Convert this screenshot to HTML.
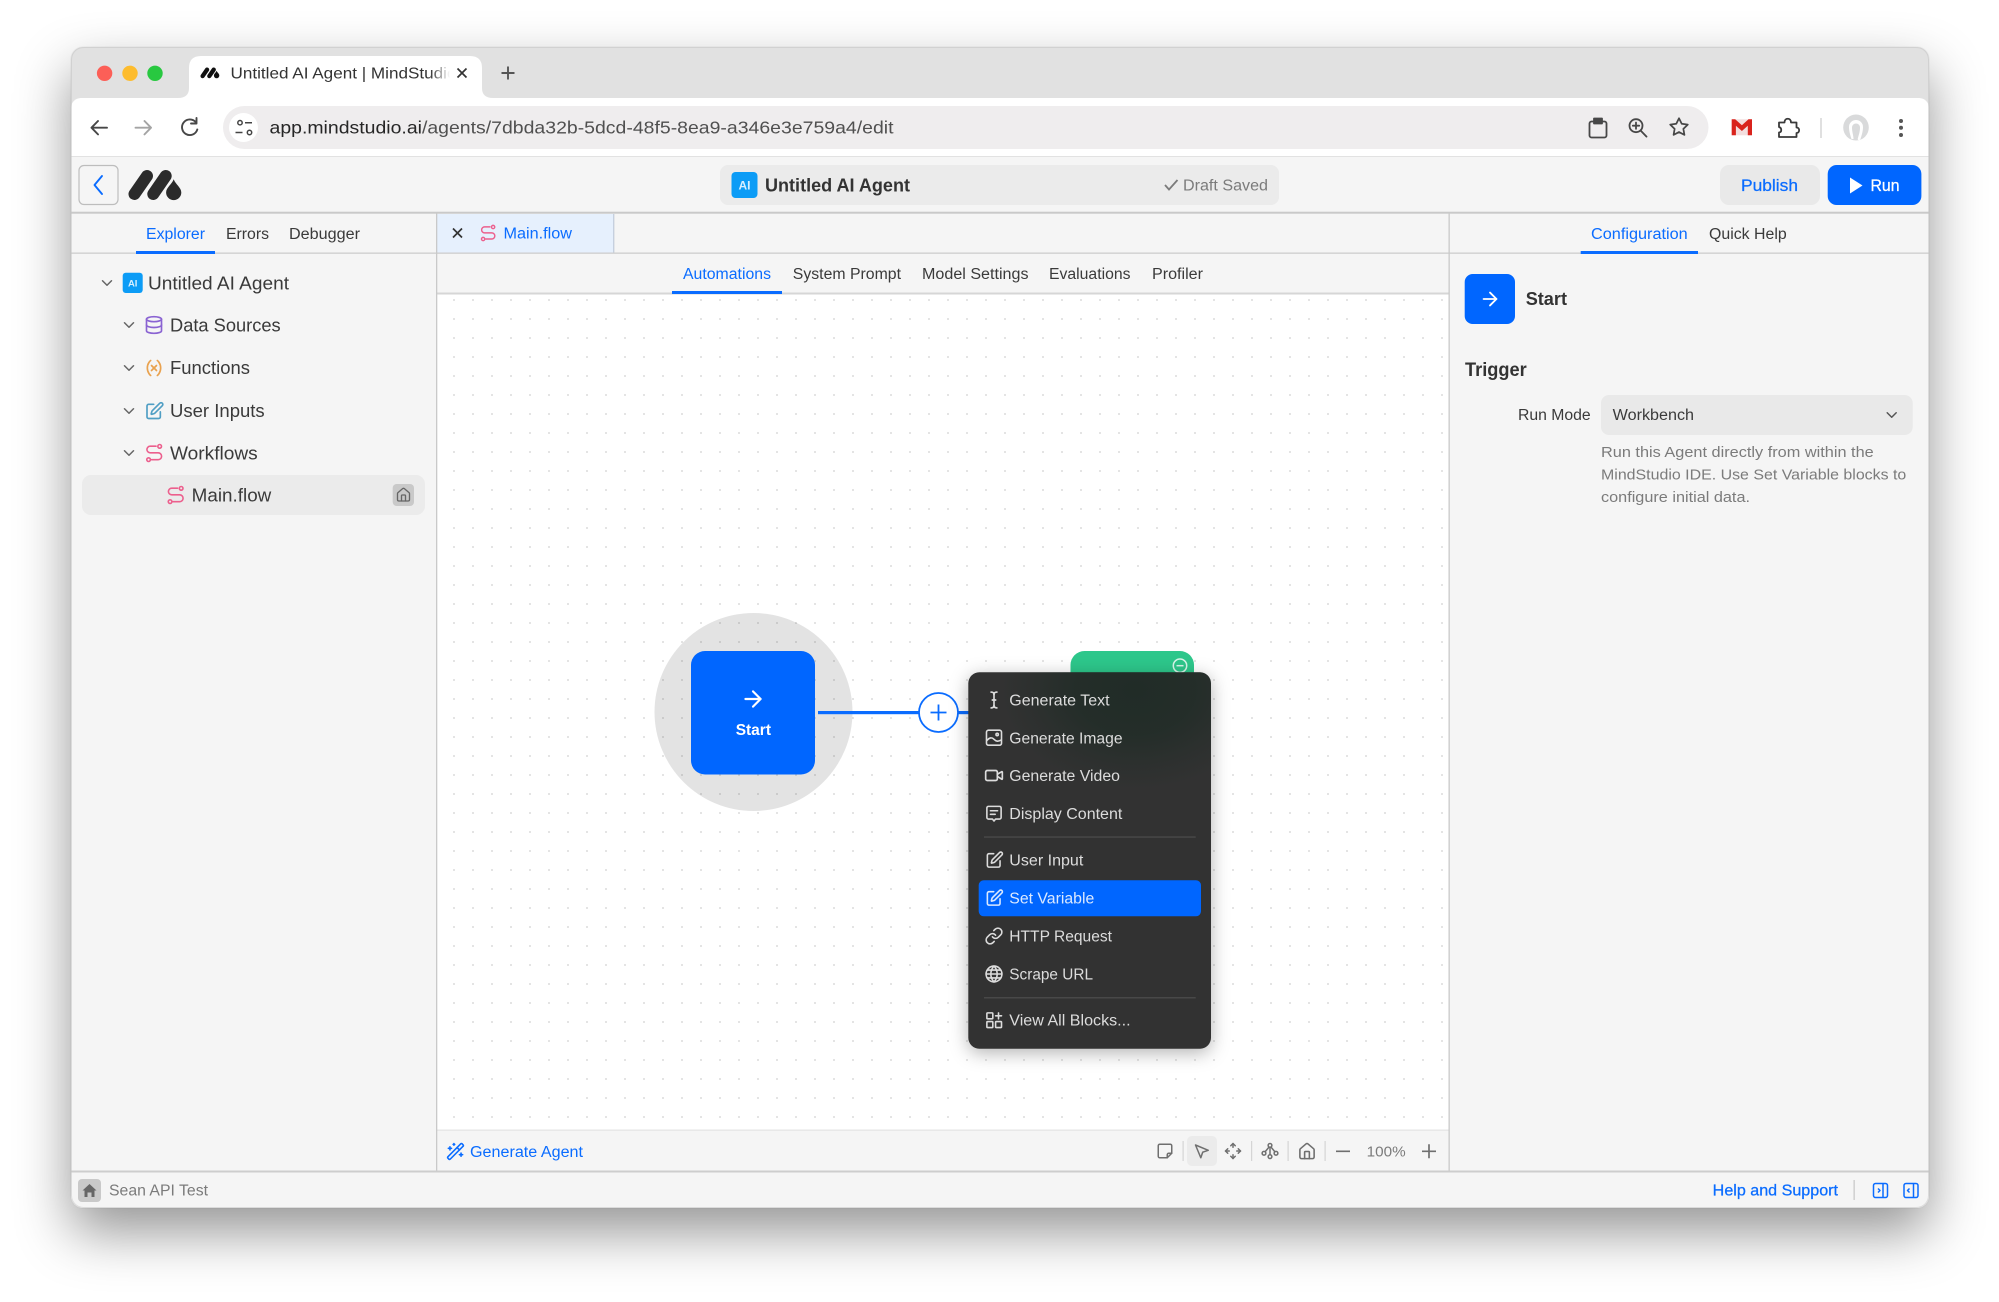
<!DOCTYPE html>
<html lang="en"><head><meta charset="utf-8"><title>Untitled AI Agent | MindStudio</title>
<style>
html,body{margin:0;padding:0;background:#fff;width:1999px;height:1302px;overflow:hidden}
.win{position:absolute;left:71px;top:47px;width:1858px;height:1161px;border-radius:12px;background:#f5f5f5;box-shadow:0 24px 54px rgba(0,0,0,.42),0 0 1px rgba(0,0,0,.2)}
svg.page{position:absolute;left:0;top:0;filter:blur(.35px)}
text{font-family:"Liberation Sans",sans-serif;white-space:pre}
.m{stroke:currentColor;stroke-width:.25px}
.b{font-weight:700}
.dk{fill:#3a3a3a;color:#3a3a3a}
.bl{fill:#0a6cff;color:#0a6cff}
.gr{fill:#7b7b7b;color:#7b7b7b}
.mn{fill:#dcdcdc;color:#dcdcdc}
symbol *{fill:none;stroke:currentColor;stroke-linecap:round;stroke-linejoin:round}
</style></head><body>
<div class="win"></div>
<svg class="page" width="1999" height="1302" viewBox="0 0 1999 1302" xmlns="http://www.w3.org/2000/svg">
<defs>
<clipPath id="wc"><rect x="71" y="47" width="1858" height="1161" rx="12"/></clipPath>
<pattern id="dots" patternUnits="userSpaceOnUse" x="444.5" y="290.5" width="19" height="19"><circle cx="9.5" cy="9.5" r="1" fill="#dcdcdc"/></pattern>
<linearGradient id="fade" x1="0" x2="1"><stop offset="0" stop-color="#fff" stop-opacity="0"/><stop offset="1" stop-color="#fff"/></linearGradient>
<radialGradient id="tint"><stop offset="0" stop-color="#14281f" stop-opacity=".58"/><stop offset=".45" stop-color="#14281f" stop-opacity=".46"/><stop offset=".75" stop-color="#14281f" stop-opacity=".18"/><stop offset="1" stop-color="#14281f" stop-opacity="0"/></radialGradient>
<filter id="ms" x="-20%" y="-20%" width="140%" height="140%"><feDropShadow dx="0" dy="4" stdDeviation="9" flood-color="#000" flood-opacity=".3"/></filter>
<symbol id="route" viewBox="0 0 24 24"><circle cx="5.500" cy="20" r="2.200" stroke-width="1.900"/><path stroke-width="1.900" d="M9 20h8a4.100 4.100 0 0 0 0-8.200H7.500a4 4 0 0 1 0-8H14.500"/><circle cx="18.800" cy="4" r="2.200" stroke-width="1.900"/></symbol>
<symbol id="db" viewBox="0 0 24 24"><g stroke-width="2"><ellipse cx="12" cy="5" rx="9" ry="3"/><path d="M3 5V19A9 3 0 0 0 21 19V5"/><path d="M3 12A9 3 0 0 0 21 12"/></g></symbol>
<symbol id="var" viewBox="0 0 24 24"><g stroke-width="2"><path d="M8 21s-4-3-4-9 4-9 4-9"/><path d="M16 3s4 3 4 9-4 9-4 9"/><path d="M15 9l-6 6"/><path d="M9 9l6 6"/></g></symbol>
<symbol id="pen" viewBox="0 0 24 24"><g stroke-width="2"><path d="M11 4H5a2 2 0 0 0-2 2v13a2 2 0 0 0 2 2h12a2 2 0 0 0 2-2v-6"/><path d="M18.375 2.625a1.800 1.800 0 0 1 3 3l-9.013 9.014a2 2 0 0 1-.853.505l-2.873.84a.5.5 0 0 1-.62-.62l.84-2.873a2 2 0 0 1 .506-.852z"/></g></symbol>
<symbol id="home" viewBox="0 0 24 24"><g stroke-width="2"><path d="M15 21v-8a1 1 0 0 0-1-1h-4a1 1 0 0 0-1 1v8"/><path d="M3 10a2 2 0 0 1 .709-1.528l7-5.999a2 2 0 0 1 2.582 0l7 5.999A2 2 0 0 1 21 10v9a2 2 0 0 1-2 2H5a2 2 0 0 1-2-2z"/></g></symbol>
<symbol id="arrow" viewBox="0 0 24 24"><g stroke-width="2"><path d="M5 12h14"/><path d="M12 5l7 7-7 7"/></g></symbol>
<symbol id="chev" viewBox="0 0 24 24"><path stroke-width="2" d="M6 9l6 6 6-6"/></symbol>
<symbol id="icur" viewBox="0 0 24 24"><g stroke-width="2"><path d="M12 5v14"/><path d="M8.500 2.500c2 0 3.500 1 3.500 3 0-2 1.500-3 3.500-3"/><path d="M8.500 21.500c2 0 3.500-1 3.500-3 0 2 1.500 3 3.500 3"/><path d="M10 12h4"/></g></symbol>
<symbol id="img" viewBox="0 0 24 24"><g stroke-width="2"><rect x="2.500" y="2.500" width="19" height="19" rx="2.500"/><path d="M3 15.500c3-3.500 6-4.500 9-1.500s5 3 9 1"/><circle cx="16" cy="8" r="1.500"/></g></symbol>
<symbol id="vid" viewBox="0 0 24 24"><g stroke-width="2"><path d="M16 13l5.223 3.482a.5.5 0 0 0 .777-.416V7.870a.5.5 0 0 0-.752-.432L16 10.500"/><rect x="2" y="6" width="14" height="12" rx="2"/></g></symbol>
<symbol id="msg" viewBox="0 0 24 24"><g stroke-width="2"><path d="M5 3h14a2 2 0 0 1 2 2v12a2 2 0 0 1-2 2h-5l-2 2.500L10 19H5a2 2 0 0 1-2-2V5a2 2 0 0 1 2-2z"/><path d="M7.500 8.500h9"/><path d="M7.500 13h6"/></g></symbol>
<symbol id="link" viewBox="0 0 24 24"><g stroke-width="2"><path d="M10 13a5 5 0 0 0 7.540.540l3-3a5 5 0 0 0-7.070-7.070l-1.720 1.710"/><path d="M14 11a5 5 0 0 0-7.540-.540l-3 3a5 5 0 0 0 7.070 7.070l1.710-1.710"/></g></symbol>
<symbol id="globe" viewBox="0 0 24 24"><g stroke-width="2"><circle cx="12" cy="12" r="10"/><path d="M12 2a14.500 14.500 0 0 0 0 20 14.500 14.500 0 0 0 0-20"/><path d="M2 12h20"/><path d="M3.500 7h17"/><path d="M3.500 17h17"/></g></symbol>
<symbol id="blocks" viewBox="0 0 24 24"><g stroke-width="2"><rect x="3" y="3" width="7.500" height="7.500" rx="1"/><rect x="3" y="14" width="7.500" height="7.500" rx="1"/><rect x="14" y="14" width="7.500" height="7.500" rx="1"/><path d="M17.700 3v7.500"/><path d="M14 6.700h7.500"/></g></symbol>
<symbol id="note" viewBox="0 0 24 24"><g stroke-width="2"><path d="M21 15V5a2 2 0 0 0-2-2H5a2 2 0 0 0-2 2v14a2 2 0 0 0 2 2h10z"/><path d="M21 15h-4a2 2 0 0 0-2 2v4"/></g></symbol>
<symbol id="cursor" viewBox="0 0 24 24"><path stroke-width="2" d="M4 4l7.070 17 2.510-7.390L21 11.070z"/></symbol>
<symbol id="move" viewBox="0 0 24 24"><g stroke-width="2"><path d="M12 2v5"/><path d="M12 17v5"/><path d="M2 12h5"/><path d="M17 12h5"/><path d="M5 9l-3 3 3 3"/><path d="M9 5l3-3 3 3"/><path d="M15 19l-3 3-3-3"/><path d="M19 9l3 3-3 3"/></g></symbol>
<symbol id="tree" viewBox="0 0 24 24"><g stroke-width="2"><circle cx="12" cy="4.500" r="2.500"/><circle cx="4" cy="15" r="2.500"/><circle cx="12" cy="19.500" r="2.500"/><circle cx="20" cy="15" r="2.500"/><path d="M12 7v10"/><path d="M10.500 7L5.500 13"/><path d="M13.500 7l5 6"/></g></symbol>
<symbol id="wand" viewBox="0 0 24 24"><g stroke-width="2"><path d="M21.640 3.640l-1.280-1.280a1.210 1.210 0 0 0-1.720 0L2.360 18.640a1.210 1.210 0 0 0 0 1.720l1.280 1.280a1.200 1.200 0 0 0 1.720 0L21.640 5.360a1.200 1.200 0 0 0 0-1.720"/><path d="M14 7l3 3"/><path d="M5 6v4"/><path d="M19 14v4"/><path d="M10 2v2"/><path d="M7 8H3"/><path d="M21 16h-4"/><path d="M11 3H9"/></g></symbol>
<symbol id="star" viewBox="0 0 24 24"><path stroke-width="2" d="M12 2l3.090 6.260L22 9.270l-5 4.870 1.180 6.880L12 17.770l-6.180 3.250L7 14.140 2 9.270l6.910-1.010z"/></symbol>
<g id="logo"><g stroke="currentColor" stroke-width="12" stroke-linecap="round" fill="none"><path d="M134.500 194L147 176"/><path d="M153.300 194L165.700 176"/></g><path fill="currentColor" d="M173.700 179.300C175.500 184.500 181.300 187.500 181.300 192.500A7.600 7.600 0 0 1 166.100 192.500C166.100 187.500 171.900 184.500 173.700 179.300Z"/></g>
</defs>

<g clip-path="url(#wc)">
<rect x="71" y="47" width="1858" height="1161" fill="#f5f5f5"/>
<rect x="71" y="47" width="1858" height="60" fill="#e1e1e1"/>
<rect x="71" y="98" width="1858" height="59" rx="10" fill="#fff"/>
<rect x="71" y="110" width="1858" height="47" fill="#fff"/>
<path d="M178 98Q189 98 189 88V68Q189 56 201 56H470Q482 56 482 68V88Q482 98 493 98Z" fill="#fff"/>
<rect x="71" y="156" width="1858" height="1.500" fill="#e2e2e2"/>
<rect x="71" y="157" width="1858" height="55" fill="#f5f5f5"/>
<rect x="71" y="211.700" width="1858" height="2" fill="#c9c9c9"/>
<rect x="437" y="214" width="177" height="39" fill="#e6f0fd"/>
<rect x="613.300" y="214" width="1" height="39" fill="#b9c3d2"/>
<rect x="71" y="252.500" width="1858" height="1.300" fill="#cdcdcd"/>
<rect x="437" y="294" width="1012" height="836" fill="#fff"/>
<rect x="437" y="294" width="1012" height="836" fill="url(#dots)"/>
<rect x="437" y="292.500" width="1012" height="2" fill="#d6d6d6"/>
<rect x="437" y="1129.500" width="1012" height="1.300" fill="#e4e4e4"/>
<rect x="436" y="213" width="1.300" height="958" fill="#c9c9c9"/>
<rect x="1448.500" y="213" width="1.300" height="958" fill="#c9c9c9"/>
<rect x="71" y="1170.500" width="1858" height="2" fill="#cdcdcd"/>
</g>

<circle cx="104.600" cy="73.300" r="7.700" fill="#fc5f57"/><circle cx="130" cy="73.300" r="7.700" fill="#fdbc2e"/><circle cx="155" cy="73.300" r="7.700" fill="#28c840"/>
<use href="#logo" transform="translate(154.600,6.800) scale(.357)" style="color:#111"/>
<text x="230.500" y="78.700" font-size="16" textLength="226" lengthAdjust="spacingAndGlyphs" fill="#333">Untitled AI Agent | MindStudio</text>
<rect x="430" y="60" width="20" height="26" fill="url(#fade)"/><rect x="450" y="60" width="8" height="26" fill="#fff"/>
<path d="M457.500 68.500l9 9M466.500 68.500l-9 9" stroke="#333" stroke-width="1.700" fill="none"/>
<path d="M508 66.500v13M501.500 73h13" stroke="#555" stroke-width="1.900" fill="none"/>
<g fill="none" stroke-linecap="round" stroke-linejoin="round" stroke-width="1.900">
<path d="M107 127.700H91.500M98 121L91.500 127.700L98 134.400" stroke="#474747"/>
<path d="M135.500 127.700H151M144.500 121L151 127.700L144.500 134.400" stroke="#a4a4a4"/>
<path d="M196 122.500A7.800 7.800 0 1 0 197.300 129.500M196.500 118v5.500H191" stroke="#474747"/>
</g>
<rect x="223" y="106" width="1485.500" height="43" rx="21.500" fill="#efedee"/>
<circle cx="243.500" cy="127.500" r="14.500" fill="#fff"/>
<g fill="none" stroke="#444" stroke-width="1.500"><circle cx="240" cy="122.700" r="2.200"/><path d="M245 122.700h7M235.500 132.500h7"/><circle cx="249.500" cy="132.500" r="2.200"/></g>
<text x="269.500" y="133.700" font-size="17.500" textLength="624" lengthAdjust="spacingAndGlyphs" fill="#505050"><tspan fill="#262626">app.mindstudio.ai</tspan>/agents/7dbda32b-5dcd-48f5-8ea9-a346e3e759a4/edit</text>
<g fill="none" stroke="#474747" stroke-width="1.800" stroke-linecap="round" stroke-linejoin="round">
<path d="M1594 121.500h-2.500a2 2 0 0 0-2 2v12a2 2 0 0 0 2 2h13a2 2 0 0 0 2-2v-12a2 2 0 0 0-2-2H1602"/><rect x="1594" y="118.500" width="8" height="5" fill="#474747"/>
<circle cx="1636" cy="125.700" r="6.500"/><path d="M1640.700 130.600l5.800 6M1636 122.500v6.400M1632.800 125.700h6.400"/>
</g>
<use href="#star" x="1668.500" y="116.500" width="21" height="21" style="color:#474747"/>
<rect x="1731.700" y="119.300" width="20.300" height="16" fill="#f3dede"/>
<path d="M1731.700 119.300h3.500l6.700 6 6.600-6h3.500v16h-4.200v-9.500l-5.900 5.200-6-5.200v9.500h-4.200z" fill="#d9231c"/>
<path d="M1779 122.500h5.500c0-5 6.500-5 6.500 0h5.500v5c3.500 0 3.500 5.500 0 5.500v4h-17.500v-4.500c3-.5 3-4.500 0-5.500z" fill="none" stroke="#3a3a3a" stroke-width="1.800" stroke-linejoin="round"/>
<rect x="1820" y="118" width="2" height="20" fill="#e0e0e0"/>
<ellipse cx="1856" cy="127.500" rx="12.800" ry="13" fill="#d9dadb"/><path d="M1851.500 139c-2-6-2.500-9-2.500-12a7 7 0 0 1 14 0c0 3-.5 6-2.500 12-1 1.500-2.500 1.500-2.800 0 1-4 2.300-7 2.300-11.500a4 4 0 0 0-8 0c0 4.500 1.500 8 1.500 11.500z" fill="#fff"/>
<circle cx="1901" cy="121" r="2" fill="#555"/><circle cx="1901" cy="127.800" r="2" fill="#555"/><circle cx="1901" cy="135" r="2" fill="#555"/>

<rect x="79" y="165.500" width="39" height="39" rx="5" fill="#f5f5f5" stroke="#bdbdbd" stroke-width="1.200"/>
<path d="M102 176L94.500 185L102 194" fill="none" stroke="#0a6cff" stroke-width="1.900" stroke-linecap="round" stroke-linejoin="round"/>
<use href="#logo" style="color:#2b2b2b"/>
<rect x="720" y="165" width="559" height="40" rx="8" fill="#ebebeb"/>
<rect x="731.500" y="172" width="26" height="26" rx="4" fill="#0c9cf6"/>
<text x="744.500" y="189.500" font-size="12" text-anchor="middle" class="b" fill="#d7efff">AI</text>
<text x="765" y="191.300" font-size="18" class="b" textLength="145" lengthAdjust="spacingAndGlyphs" fill="#333">Untitled AI Agent</text>
<path d="M1165 185l4 4.500 8.500-9.500" fill="none" stroke="#7b7b7b" stroke-width="1.800"/>
<text x="1183" y="190.600" font-size="15.500" textLength="85" lengthAdjust="spacingAndGlyphs" class="gr">Draft Saved</text>
<rect x="1720" y="165" width="100" height="40" rx="9" fill="#e9e9e9"/>
<text x="1741" y="191" font-size="17" textLength="57" lengthAdjust="spacingAndGlyphs" class="bl m">Publish</text>
<rect x="1827.700" y="165" width="93.700" height="40" rx="9" fill="#0066ff"/>
<path d="M1850 177.500L1862.500 185.500L1850 193.500Z" fill="#fff"/>
<text x="1870.500" y="191" font-size="17" textLength="29" lengthAdjust="spacingAndGlyphs" fill="#fff" color="#fff" class="m">Run</text>

<rect x="136" y="251" width="79" height="3" fill="#0a6cff"/>
<text x="146" y="239.100" font-size="15.500" textLength="59" lengthAdjust="spacingAndGlyphs" class="bl">Explorer</text>
<text x="226" y="239.100" font-size="15.500" textLength="43" lengthAdjust="spacingAndGlyphs" class="dk">Errors</text>
<text x="289" y="239.100" font-size="15.500" textLength="71" lengthAdjust="spacingAndGlyphs" class="dk">Debugger</text>

<use href="#chev" x="98" y="274" width="18" height="18" style="color:#666"/>
<rect x="122.700" y="272.700" width="20" height="20.300" rx="3" fill="#0c9cf6"/>
<text x="132.700" y="286.500" font-size="9.500" text-anchor="middle" class="b" fill="#d7efff">AI</text>
<text x="148" y="289.300" font-size="18" textLength="141" lengthAdjust="spacingAndGlyphs" class="dk">Untitled AI Agent</text>
<use href="#chev" x="120" y="316" width="18" height="18" style="color:#666"/>
<use href="#db" x="144" y="315" width="20" height="20" style="color:#8a63d2"/>
<text x="170" y="331.300" font-size="18" textLength="110.700" lengthAdjust="spacingAndGlyphs" class="dk">Data Sources</text>
<use href="#chev" x="120" y="359" width="18" height="18" style="color:#666"/>
<use href="#var" x="144" y="358" width="20" height="20" style="color:#e9a24f"/>
<text x="170" y="374" font-size="18" textLength="80" lengthAdjust="spacingAndGlyphs" class="dk">Functions</text>
<use href="#chev" x="120" y="402" width="18" height="18" style="color:#666"/>
<use href="#pen" x="144.500" y="401" width="20" height="20" style="color:#4f9ec4"/>
<text x="170" y="417" font-size="18" textLength="94.700" lengthAdjust="spacingAndGlyphs" class="dk">User Inputs</text>
<use href="#chev" x="120" y="444" width="18" height="18" style="color:#666"/>
<use href="#route" x="144" y="443" width="20" height="20" style="color:#ec5f8d"/>
<text x="170" y="459.500" font-size="18" textLength="87.700" lengthAdjust="spacingAndGlyphs" class="dk">Workflows</text>
<rect x="82" y="475" width="343" height="40" rx="9" fill="#ebebeb"/>
<use href="#route" x="165.500" y="485" width="20" height="20" style="color:#ec5f8d"/>
<text x="191.700" y="501.500" font-size="18" textLength="79.600" lengthAdjust="spacingAndGlyphs" class="dk">Main.flow</text>
<rect x="392.700" y="484" width="21.300" height="22" rx="4" fill="#c9c9c9"/>
<use href="#home" x="395.500" y="487" width="16" height="16" style="color:#666"/>

<path d="M453 228.500l9 9M462 228.500l-9 9" stroke="#333" stroke-width="1.700" fill="none"/>
<use href="#route" x="479" y="224" width="18" height="18" style="color:#ec5f8d"/>
<text x="503.500" y="238.500" font-size="15.500" textLength="68.500" lengthAdjust="spacingAndGlyphs" class="bl">Main.flow</text>
<rect x="672" y="291" width="110" height="3" fill="#0a6cff"/>
<text x="683" y="279" font-size="15.500" textLength="88" lengthAdjust="spacingAndGlyphs" class="bl">Automations</text>
<text x="792.800" y="279" font-size="15.500" textLength="108.200" lengthAdjust="spacingAndGlyphs" class="dk">System Prompt</text>
<text x="922" y="279" font-size="15.500" textLength="106.500" lengthAdjust="spacingAndGlyphs" class="dk">Model Settings</text>
<text x="1049" y="279" font-size="15.500" textLength="81.500" lengthAdjust="spacingAndGlyphs" class="dk">Evaluations</text>
<text x="1152" y="279" font-size="15.500" textLength="51" lengthAdjust="spacingAndGlyphs" class="dk">Profiler</text>

<circle cx="753.500" cy="712" r="99" fill="#000" fill-opacity=".11"/>
<rect x="691" y="651" width="124" height="123.500" rx="14" fill="#0066ff"/>
<use href="#arrow" x="740" y="686" width="26" height="26" style="color:#fff"/>
<text x="735.700" y="734.800" font-size="15.500" class="b" textLength="35.300" lengthAdjust="spacingAndGlyphs" fill="#fff">Start</text>
<rect x="818" y="711" width="260" height="3.200" fill="#0a6cff"/>
<circle cx="938.500" cy="712.500" r="19.500" fill="#fff" stroke="#0a6cff" stroke-width="1.800"/>
<path d="M938.500 704.500v16M930.500 712.500h16" stroke="#0a6cff" stroke-width="1.800" fill="none"/>
<rect x="1070.500" y="651" width="123.500" height="60" rx="14" fill="#2dc78b"/>
<circle cx="1180" cy="665.700" r="6.700" fill="none" stroke="#d8f5ea" stroke-width="1.500"/><path d="M1176.500 665.700h7" stroke="#d8f5ea" stroke-width="1.500"/>

<rect x="968.300" y="672.300" width="242.700" height="376.400" rx="11" fill="#303030" filter="url(#ms)"/>
<clipPath id="mc"><rect x="968.300" y="672.300" width="242.700" height="376.400" rx="11"/></clipPath>
<g clip-path="url(#mc)"><ellipse cx="1135" cy="690" rx="135" ry="100" fill="url(#tint)"/></g>
<use href="#icur" x="984" y="690" width="20" height="20" class="mn"/>
<text x="1009.300" y="705.500" font-size="15.500" textLength="100.300" lengthAdjust="spacingAndGlyphs" class="mn">Generate Text</text>
<use href="#img" x="984.500" y="728.200" width="19" height="19" class="mn"/>
<text x="1009.300" y="743.300" font-size="15.500" textLength="113.300" lengthAdjust="spacingAndGlyphs" class="mn">Generate Image</text>
<use href="#vid" x="984" y="765.500" width="20" height="20" class="mn"/>
<text x="1009.300" y="781.100" font-size="15.500" textLength="110.700" lengthAdjust="spacingAndGlyphs" class="mn">Generate Video</text>
<use href="#msg" x="984.500" y="804" width="19" height="19" class="mn"/>
<text x="1009.300" y="819.100" font-size="15.500" textLength="113" lengthAdjust="spacingAndGlyphs" class="mn">Display Content</text>
<rect x="984" y="836.300" width="211.700" height="1.500" fill="#484848"/>
<use href="#pen" x="985" y="850.500" width="19" height="19" class="mn"/>
<text x="1009.300" y="865.600" font-size="15.500" textLength="74" lengthAdjust="spacingAndGlyphs" class="mn">User Input</text>
<rect x="978.700" y="880.300" width="222.300" height="36" rx="5" fill="#0066ff"/>
<use href="#pen" x="985" y="888.500" width="19" height="19" style="color:#dbe9ff"/>
<text x="1009.300" y="903.600" font-size="15.500" textLength="85" lengthAdjust="spacingAndGlyphs" fill="#dbe9ff">Set Variable</text>
<use href="#link" x="984.500" y="926.500" width="19" height="19" class="mn"/>
<text x="1009.300" y="941.600" font-size="15.500" textLength="102.700" lengthAdjust="spacingAndGlyphs" class="mn">HTTP Request</text>
<use href="#globe" x="984.500" y="964.500" width="19" height="19" class="mn"/>
<text x="1009.300" y="979.600" font-size="15.500" textLength="83.700" lengthAdjust="spacingAndGlyphs" class="mn">Scrape URL</text>
<rect x="984" y="997" width="211.700" height="1.500" fill="#484848"/>
<use href="#blocks" x="984.500" y="1010.500" width="19" height="19" class="mn"/>
<text x="1009.300" y="1025.600" font-size="15.500" textLength="121.300" lengthAdjust="spacingAndGlyphs" class="mn">View All Blocks...</text>

<use href="#wand" x="446" y="1142" width="19" height="19" class="bl"/>
<text x="470" y="1157" font-size="15.500" textLength="113" lengthAdjust="spacingAndGlyphs" class="bl">Generate Agent</text>
<g style="color:#6f6f6f">
<use href="#note" x="1156" y="1142" width="18" height="18"/>
<rect x="1182.500" y="1141" width="1.200" height="20" fill="#d5d5d5"/>
<rect x="1187" y="1136" width="30" height="30" rx="5" fill="#ebebeb"/>
<use href="#cursor" x="1192.500" y="1142" width="18" height="18"/>
<use href="#move" x="1224" y="1142" width="18" height="18"/>
<rect x="1251" y="1141" width="1.200" height="20" fill="#d5d5d5"/>
<use href="#tree" x="1261" y="1142" width="18" height="18"/>
<rect x="1287.500" y="1141" width="1.200" height="20" fill="#d5d5d5"/>
<use href="#home" x="1297.500" y="1142" width="19" height="19"/>
<rect x="1324.500" y="1141" width="1.200" height="20" fill="#d5d5d5"/>
<path d="M1336 1151.300h14M1422 1151.300h14M1429 1144.300v14" stroke="#6f6f6f" stroke-width="1.700" fill="none"/>
<text x="1366.700" y="1156.300" font-size="15" textLength="39" lengthAdjust="spacingAndGlyphs" fill="#7b7b7b">100%</text>
</g>

<rect x="78" y="1179" width="23" height="23" rx="4" fill="#c9c9c9"/>
<path d="M89.500 1184L82.500 1190.500h2v6.500h3v-4.500h4v4.500h3v-6.500h2Z" fill="#666"/>
<text x="109" y="1195.600" font-size="15.500" textLength="99" lengthAdjust="spacingAndGlyphs" class="gr">Sean API Test</text>
<text x="1712.700" y="1195.600" font-size="15.500" textLength="125.300" lengthAdjust="spacingAndGlyphs" class="bl m">Help and Support</text>
<rect x="1853.500" y="1180" width="1.300" height="20" fill="#c9c9c9"/>
<g fill="none" stroke="#0a6cff" stroke-width="1.500" stroke-linejoin="round">
<rect x="1873.500" y="1183.500" width="14" height="14" rx="2"/><path d="M1883 1183.500v14M1878 1188.500l2 2-2 2"/>
<rect x="1904" y="1183.500" width="14" height="14" rx="2"/><path d="M1913.500 1183.500v14M1909.500 1188.500l-2 2 2 2"/>
</g>

<rect x="1580.700" y="251" width="117.300" height="3" fill="#0a6cff"/>
<text x="1591" y="239.100" font-size="15.500" textLength="96.700" lengthAdjust="spacingAndGlyphs" class="bl">Configuration</text>
<text x="1709" y="239.100" font-size="15.500" textLength="77.700" lengthAdjust="spacingAndGlyphs" class="dk">Quick Help</text>
<rect x="1464.700" y="274" width="50.300" height="50" rx="8" fill="#0066ff"/>
<use href="#arrow" x="1479" y="288" width="22" height="22" style="color:#fff"/>
<text x="1525.700" y="305" font-size="18" class="b" textLength="41.300" lengthAdjust="spacingAndGlyphs" fill="#333">Start</text>
<text x="1465" y="376" font-size="19" class="b" textLength="61.700" lengthAdjust="spacingAndGlyphs" fill="#333">Trigger</text>
<text x="1518" y="420.200" font-size="15.500" textLength="72.700" lengthAdjust="spacingAndGlyphs" class="dk">Run Mode</text>
<rect x="1601" y="395" width="311.700" height="40" rx="8" fill="#e9e9e9"/>
<text x="1612.700" y="420.200" font-size="15.500" textLength="81.300" lengthAdjust="spacingAndGlyphs" class="dk">Workbench</text>
<use href="#chev" x="1882.700" y="406" width="18" height="18" style="color:#555"/>
<text x="1601" y="457" font-size="15" textLength="272.700" lengthAdjust="spacingAndGlyphs" class="gr">Run this Agent directly from within the</text>
<text x="1601" y="479.600" font-size="15" textLength="305.300" lengthAdjust="spacingAndGlyphs" class="gr">MindStudio IDE. Use Set Variable blocks to</text>
<text x="1601" y="502.200" font-size="15" textLength="149" lengthAdjust="spacingAndGlyphs" class="gr">configure initial data.</text>
<rect x="71.500" y="47.500" width="1857" height="1160" rx="12" fill="none" stroke="#c4c4c4" stroke-opacity=".55"/>
</svg>
</body></html>
